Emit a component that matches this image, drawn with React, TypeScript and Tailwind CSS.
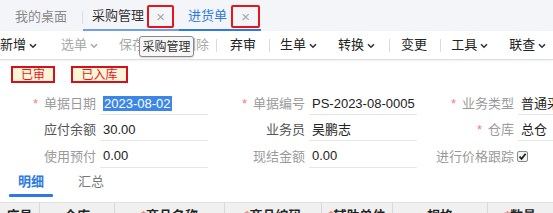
import React from 'react';

const Chevron: React.FC<{ muted?: boolean }> = ({ muted }) => (
  <svg width="8" height="6" viewBox="0 0 8 6" className="ml-[3px] mt-[1px]">
    <path d="M1 1.2 L4 4.2 L7 1.2" fill="none" stroke={muted ? '#a8a8a8' : '#333'} strokeWidth="1.6" />
  </svg>
);

const Sep: React.FC<{ ml: string }> = ({ ml }) => <div className={`${ml} w-px h-[13px] bg-[#dcdcdc]`} />;

const Field: React.FC<{ label: string; value?: string; required?: boolean; muted?: boolean; children?: React.ReactNode }> = ({ label, value, required, muted, children }) => (
  <div className="w-[209px] flex items-center shrink-0">
    <div className={`w-[96px] text-right whitespace-nowrap ${muted ? 'text-[#9a9a9a]' : 'text-[#555]'}`}>
      {required && <span className="text-[#f08080] mr-[6px]">*</span>}
      {label}
    </div>
    <div className="ml-[4px] w-[108px] h-[22px] border-b border-[#e6e6e6] flex items-center pl-[3px] text-[#222] whitespace-nowrap overflow-hidden">
      {children ?? value}
    </div>
  </div>
);

export default function App() {
  return (
    <div className="w-[553px] h-[213px] overflow-hidden bg-white relative text-[13px]" style={{ fontFamily: '"Liberation Sans", "Noto Sans CJK SC", sans-serif' }}>
      {/* Tab bar */}
      <div className="h-[31px] bg-[#f4f5f9] flex items-stretch whitespace-nowrap">
        <div className="pl-[15px] w-[82px] shrink-0 flex items-center text-[#8a8a8a] pt-[3px]">我的桌面</div>
        <div className="w-px h-[13px] bg-[#dcdde2] self-center mt-[3px]" />
        <div className="w-[96px] shrink-0 flex items-center border-b-2 border-[#6f9fe6] pl-[9px]">
          <span className="text-[#333] pt-[3px]">采购管理</span>
          <div className="ml-[3px] mt-[4px] w-[27px] h-[23px] border-2 border-[#e4161b] rounded-[2px] flex items-center justify-center text-[#a8a8a8] text-[15px] leading-none">×</div>
        </div>
        <div className="w-[82px] shrink-0 flex items-center border-b-2 border-[#2d7be0] pl-[9px]">
          <span className="text-[#2d7be0] pt-[3px]">进货单</span>
          <div className="ml-[4px] mt-[4px] w-[29px] h-[23px] border-2 border-[#e4161b] rounded-[2px] flex items-center justify-center text-[#a8a8a8] text-[15px] leading-none">×</div>
        </div>
      </div>

      {/* Toolbar */}
      <div className="h-[29px] flex items-center border-b border-[#dedede] shadow-[0_1px_2px_rgba(0,0,0,0.06)] whitespace-nowrap">
        <div className="flex items-center text-[#222]">新增<Chevron /></div>
        <div className="ml-[24px] flex items-center text-[#a8a8a8]">选单<Chevron muted /></div>
        <div className="ml-[21px] flex items-center text-[#a8a8a8]">保存</div>
        <div className="ml-[38px] flex items-center text-[#a8a8a8]">删除</div>
        <Sep ml="ml-[7px]" />
        <div className="ml-[13px] flex items-center text-[#222]">弃审</div>
        <Sep ml="ml-[13px]" />
        <div className="ml-[10px] flex items-center text-[#222]">生单<Chevron /></div>
        <div className="ml-[21px] flex items-center text-[#222]">转换<Chevron /></div>
        <Sep ml="ml-[14px]" />
        <div className="ml-[11px] flex items-center text-[#222]">变更</div>
        <Sep ml="ml-[13px]" />
        <div className="ml-[10px] flex items-center text-[#222]">工具<Chevron /></div>
        <div className="ml-[21px] flex items-center text-[#222]">联查<Chevron /></div>
      </div>

      {/* Tooltip */}
      <div className="absolute left-[139px] top-[36px] w-[55px] h-[21px] border border-[#8a8a8a] rounded-[3px] bg-[#f7f7f7] flex items-center justify-center text-[12px] text-[#333] shadow-[0_1px_2px_rgba(0,0,0,0.15)]">
        采购管理
      </div>

      {/* Status badges */}
      <div className="flex items-center pl-[11px] pt-[6px] gap-[16px] text-[12px] text-[#e4161b]">
        <div className="w-[44px] h-[17px] border-2 border-[#d4101a] bg-[#fbf5d8] flex items-center justify-center leading-none">已审</div>
        <div className="w-[57px] h-[17px] border-2 border-[#d4101a] bg-[#fbf5d8] flex items-center justify-center leading-none">已入库</div>
      </div>

      {/* Form */}
      <div className="pt-[8px] flex flex-col">
        <div className="flex h-[26px] items-center">
          <Field label="单据日期" required muted>
            <span className="bg-[#3b86e6] text-white px-[1px] leading-[15px]">2023-08-02</span>
          </Field>
          <Field label="单据编号" value="PS-2023-08-0005" required muted />
          <Field label="业务类型" value="普通采购" required muted />
        </div>
        <div className="flex h-[26px] items-center">
          <Field label="应付余额" value="30.00" />
          <Field label="业务员" value="吴鹏志" />
          <Field label="仓库" value="总仓" required muted />
        </div>
        <div className="flex h-[27px] items-center">
          <Field label="使用预付" value="0.00" muted />
          <Field label="现结金额" value="0.00" muted />
          <div className="w-[209px] flex items-center shrink-0">
            <div className="w-[96px] text-right text-[#9a9a9a] whitespace-nowrap">进行价格跟踪</div>
            <div className="ml-[3px] w-[11px] h-[11px] border border-[#8a8a8a] rounded-[2px] bg-[#f2f2f2] flex items-center justify-center">
              <svg width="9" height="9" viewBox="0 0 9 9"><path d="M1.5 4.6 L3.6 6.8 L7.6 1.8" fill="none" stroke="#222" strokeWidth="1.8" /></svg>
            </div>
          </div>
        </div>
      </div>

      {/* Detail tabs */}
      <div className="flex items-end h-[27px] pl-[9px]">
        <div className="w-[44px] flex flex-col items-center">
          <span className="text-[#2d7be0] font-semibold">明细</span>
          <div className="mt-[3px] w-[44px] h-[3px] bg-[#2d7be0] rounded-[1px]" />
        </div>
        <div className="ml-[20px] w-[36px] pb-[6px] text-center text-[#777]">汇总</div>
      </div>

      {/* Table header */}
      <div className="mt-[5px] h-[28px] bg-[#f0f0f0] border-t border-[#e0e0e0] flex text-[#222] font-semibold whitespace-nowrap">
        <div className="w-[40px] border-r border-[#d8d8d8] text-center pt-[3px]">序号</div>
        <div className="w-[75px] border-r border-[#d8d8d8] text-center pt-[3px]">仓库</div>
        <div className="w-[110px] border-r border-[#d8d8d8] text-center pt-[3px]"><span className="text-[#f08080]">*</span>商品名称</div>
        <div className="w-[97px] border-r border-[#d8d8d8] text-center pt-[3px]"><span className="text-[#f08080]">*</span>商品编码</div>
        <div className="w-[71px] border-r border-[#d8d8d8] text-center pt-[3px]"><span className="text-[#f08080]">*</span>辅助单位</div>
        <div className="w-[95px] border-r border-[#d8d8d8] text-center pt-[3px]">规格</div>
        <div className="flex-1 text-center pt-[3px]"><span className="text-[#f08080]">*</span>数量</div>
      </div>
    </div>
  );
}
